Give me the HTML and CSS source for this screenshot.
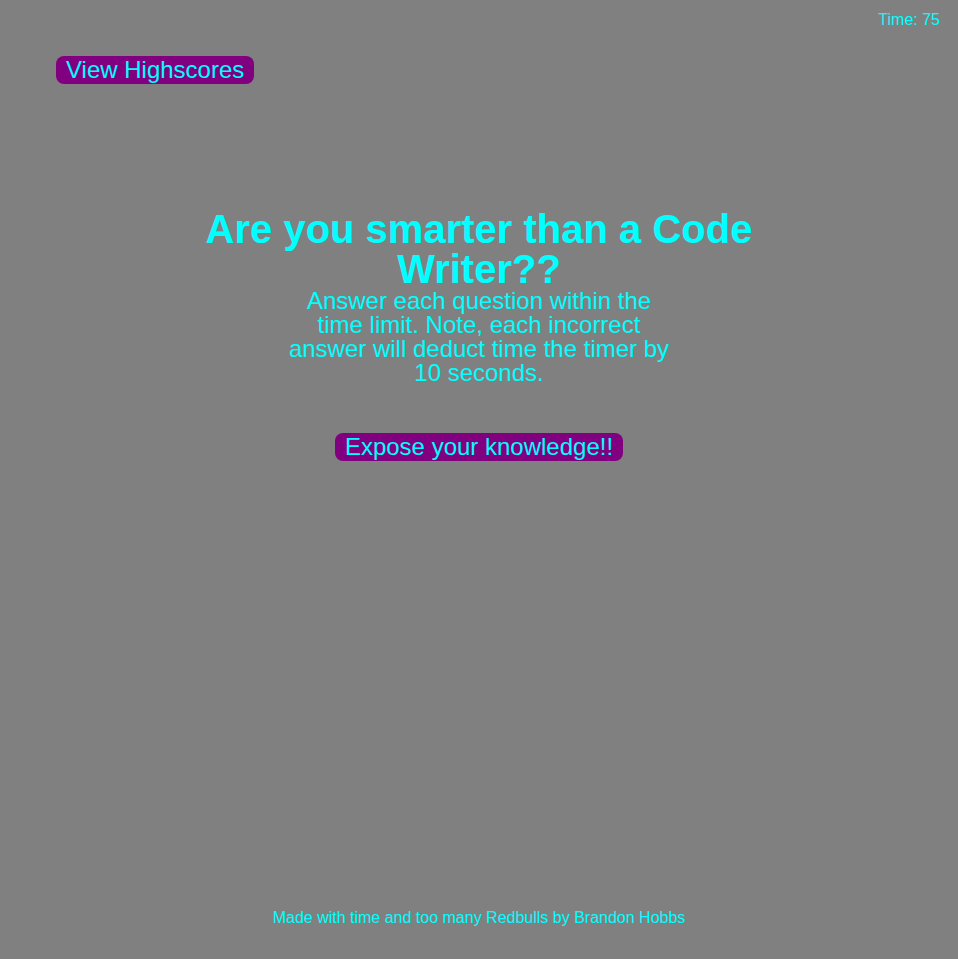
FILE: index.html
```html
<!DOCTYPE html>
<html lang="en">
<head>
<meta charset="utf-8">
<title>Code Quiz</title>
<link rel="stylesheet" href="styles.css">
</head>
<body>
<div class="page">
  <header class="top">
    <div class="timer">Time: 75</div>
    <div class="nav"><button class="btn">View Highscores</button></div>
  </header>
  <main class="intro">
    <h1 class="title">Are you smarter than a Code Writer??</h1>
    <p class="desc">Answer each question within the time limit. Note, each incorrect answer will deduct time the timer by 10 seconds.</p>
    <button class="btn start">Expose your knowledge!!</button>
  </main>
  <footer class="foot">Made with time and too many Redbulls by Brandon Hobbs</footer>
</div>
</body>
</html>
```
FILE: styles.css
```css
html, body {
  margin: 0;
  padding: 0;
  background: #808080;
  color: #00ffff;
  font-family: "Liberation Sans", Arial, sans-serif;
}
.page {
  height: 959px;
  display: flex;
  flex-direction: column;
}
.top {
  display: flex;
  flex-direction: column;
}
.timer {
  align-self: flex-end;
  font-size: 16px;
  line-height: 18px;
  padding: 11px 18px 0 0;
}
.nav {
  padding: 27px 0 0 56px;
}
.btn {
  background: #800080;
  color: #00ffff;
  border: none;
  border-radius: 8px;
  font-family: "Liberation Sans", Arial, sans-serif;
  font-size: 24px;
  line-height: 28px;
  padding: 0 10px;
  margin: 0;
  cursor: pointer;
}
.intro {
  display: flex;
  flex-direction: column;
  align-items: center;
  padding-top: 125px;
}
.title {
  width: 560px;
  margin: 0;
  text-align: center;
  font-size: 40px;
  line-height: 40px;
  font-weight: bold;
}
.desc {
  width: 392px;
  margin: 0;
  text-align: center;
  font-size: 24px;
  line-height: 24px;
}
.start {
  margin-top: 48px;
}
.foot {
  margin-top: auto;
  text-align: center;
  font-size: 16px;
  line-height: 18px;
  padding-bottom: 32px;
}
```
